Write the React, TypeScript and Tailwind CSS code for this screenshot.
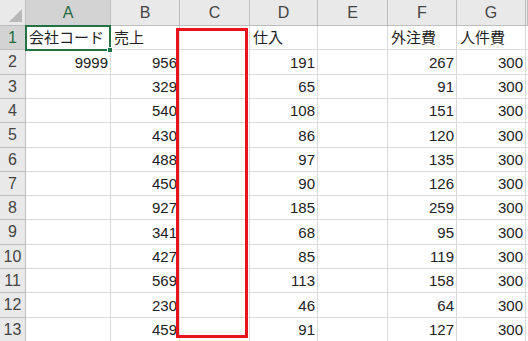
import React from "react";

const colW = [26, 85, 69, 70, 68, 70, 69, 69, 2];
const colNames = ["", "A", "B", "C", "D", "E", "F", "G", ""];
const rowH = [24, 25, 24, 24, 25, 24, 24, 24, 25, 24, 24, 25, 24];

const B = [956, 329, 540, 430, 488, 450, 927, 341, 427, 569, 230, 459];
const D = [191, 65, 108, 86, 97, 90, 185, 68, 85, 113, 46, 91];
const F = [267, 91, 151, 120, 135, 126, 259, 95, 119, 158, 64, 127];

type Cell = { v: string; num?: boolean };

function rowCells(r: number): Cell[] {
  if (r === 0)
    return [
      { v: "会社コード" },
      { v: "売上" },
      { v: "" },
      { v: "仕入" },
      { v: "" },
      { v: "外注費" },
      { v: "人件費" },
      { v: "" },
    ];
  const i = r - 1;
  return [
    { v: r === 1 ? "9999" : "", num: true },
    { v: String(B[i]), num: true },
    { v: "" },
    { v: String(D[i]), num: true },
    { v: "" },
    { v: String(F[i]), num: true },
    { v: "300", num: true },
    { v: "" },
  ];
}

export default function App() {
  const font = {
    fontFamily: '"Liberation Sans", "Noto Sans CJK JP", sans-serif',
  };
  return (
    <div
      className="relative w-[528px] h-[341px] overflow-hidden bg-white text-[15px] text-[#222]"
      style={font}
    >
      {/* header row */}
      <div className="flex h-[26px]">
        {colNames.map((n, c) => (
          <div
            key={c}
            style={{ width: colW[c] }}
            className={
              "shrink-0 flex items-center justify-center border-b border-r border-[#bdbdbd] " +
              (c === 1
                ? "bg-[#d3d3d3] text-[#1e6b41] border-b-[#217346]"
                : "bg-[#e9e9e9] text-[#444]")
            }
          >
            {c === 0 ? (
              <svg width="25" height="25" viewBox="0 0 25 25">
                <polygon points="22,9 22,22 9,22" fill="#b8b8b8" />
              </svg>
            ) : (
              <span className="text-[16px]">{n}</span>
            )}
          </div>
        ))}
      </div>
      {rowH.map((h, r) => (
        <div key={r} className="flex" style={{ height: h }}>
          <div
            style={{ width: colW[0] }}
            className={
              "shrink-0 flex items-center justify-center border-b border-r border-[#bdbdbd] text-[16px] " +
              (r === 0
                ? "bg-[#d3d3d3] text-[#1e6b41] border-r-[#217346]"
                : "bg-[#e9e9e9] text-[#444]")
            }
          >
            {r + 1}
          </div>
          {rowCells(r).map((cell, c) => (
            <div
              key={c}
              style={{ width: colW[c + 1] }}
              className={
                "shrink-0 flex items-center border-b border-r border-[#dadada] whitespace-nowrap overflow-visible " +
                (cell.num ? "justify-end pr-[2px]" : "justify-start pl-[3px]")
              }
            >
              <span className="pt-[2px]">{cell.v}</span>
            </div>
          ))}
        </div>
      ))}
      {/* active cell A1 */}
      <div className="absolute left-[25px] top-[25px] w-[86px] h-[26px] border-2 border-[#217346] pointer-events-none">
        <div className="absolute right-[-4px] bottom-[-4px] w-[6px] h-[6px] bg-[#217346] border border-white" />
      </div>
      {/* red highlight box over column C */}
      <div className="absolute left-[176px] top-[28px] w-[72px] h-[310px] border-[3px] border-[#e8131f] pointer-events-none" />
    </div>
  );
}
